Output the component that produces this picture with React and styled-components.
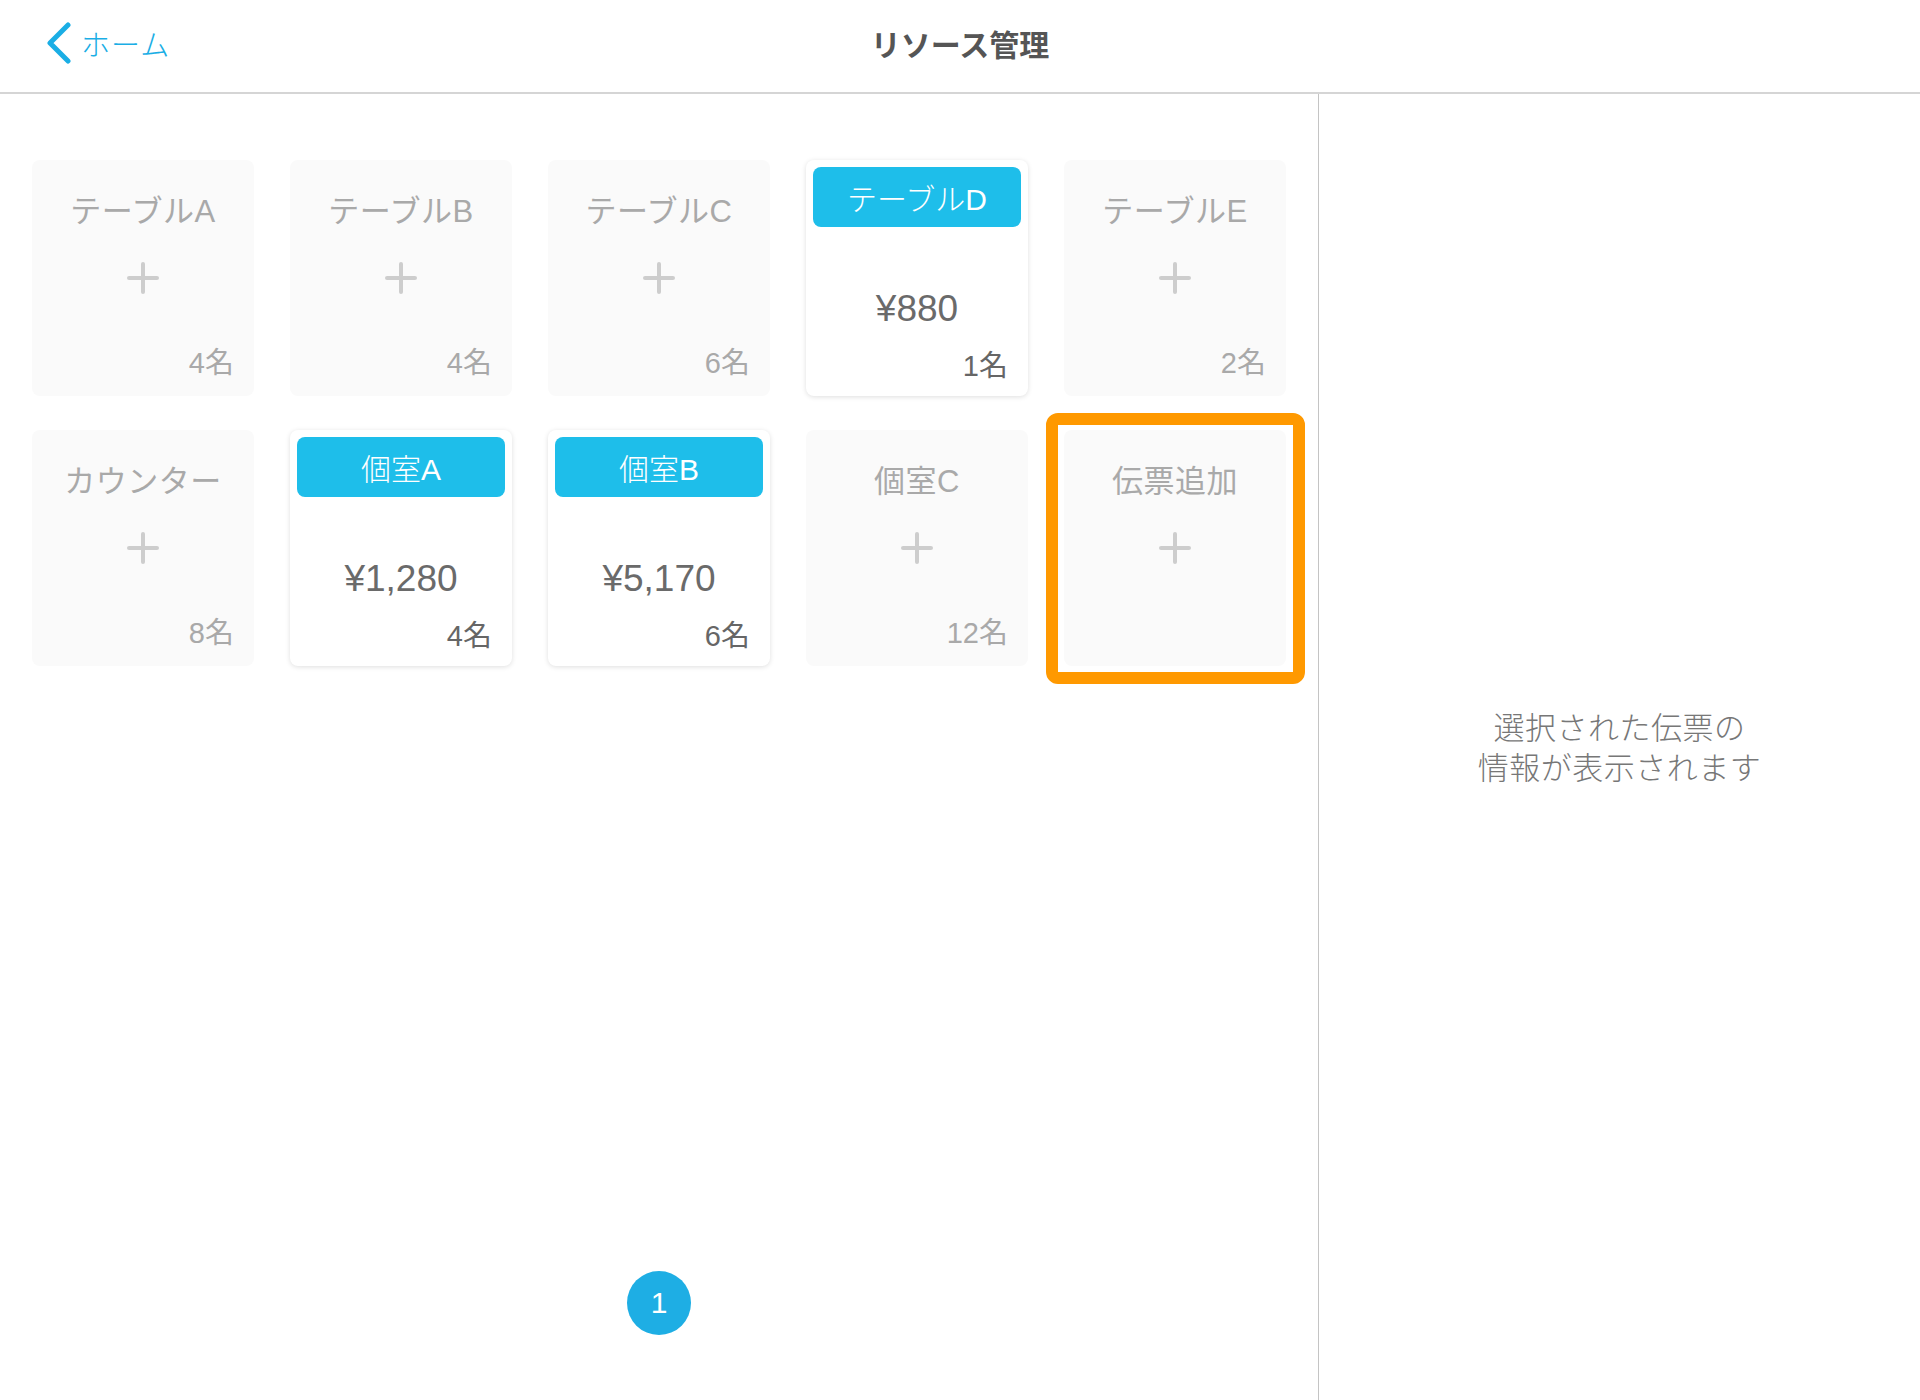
import React from "react";
import styled, { createGlobalStyle, css } from "styled-components";

const GlobalStyle = createGlobalStyle`
  body {
    margin: 0;
    background: #fff;
    font-family: "Liberation Sans", "Noto Sans CJK JP", sans-serif;
  }
`;

const resources = [
  { name: "テーブルA", seats: 4 },
  { name: "テーブルB", seats: 4 },
  { name: "テーブルC", seats: 6 },
  { name: "テーブルD", seats: 1, price: "¥880" },
  { name: "テーブルE", seats: 2 },
  { name: "カウンター", seats: 8 },
  { name: "個室A", seats: 4, price: "¥1,280" },
  { name: "個室B", seats: 6, price: "¥5,170" },
  { name: "個室C", seats: 12 },
  { name: "伝票追加", add: true, selected: true },
];

const PlusIcon = () => (
  <svg width="32" height="32" viewBox="0 0 32 32">
    <path
      d="M16 2v28M2 16h28"
      stroke="#cdcdcd"
      strokeWidth="4"
      strokeLinecap="round"
      fill="none"
    />
  </svg>
);

const Chevron = () => (
  <svg width="26" height="42" viewBox="0 0 26 42">
    <polyline
      points="22,3 4,21 22,39"
      stroke="#1aaee5"
      strokeWidth="5"
      strokeLinecap="round"
      strokeLinejoin="round"
      fill="none"
    />
  </svg>
);

const ResourceCard = ({ item }) => {
  if (item.price) {
    return (
      <Card $busy>
        <Band>{item.name}</Band>
        <Price>{item.price}</Price>
        <Seats $busy>{item.seats}名</Seats>
      </Card>
    );
  }
  return (
    <Card $selected={item.selected}>
      <Name>{item.name}</Name>
      <PlusWrap>
        <PlusIcon />
      </PlusWrap>
      {!item.add && <Seats>{item.seats}名</Seats>}
    </Card>
  );
};

const App = () => {
  return (
    <Page>
      <GlobalStyle />
      <Header>
        <Back>
          <Chevron />
          <span>ホーム</span>
        </Back>
        <Title>リソース管理</Title>
        <div />
      </Header>
      <Body>
        <LeftPanel>
          <Grid>
            {resources.map((r) => (
              <ResourceCard key={r.name} item={r} />
            ))}
          </Grid>
          <Pager>
            <PageDot>1</PageDot>
          </Pager>
        </LeftPanel>
        <RightPanel>
          <Hint>
            選択された伝票の
            <br />
            情報が表示されます
          </Hint>
        </RightPanel>
      </Body>
    </Page>
  );
};

export default App;

const Page = styled.div`
  width: 1920px;
  height: 1400px;
  display: flex;
  flex-direction: column;
  overflow: hidden;
`;

const Header = styled.div`
  height: 94px;
  flex-shrink: 0;
  box-sizing: border-box;
  padding-bottom: 6px;
  border-bottom: 2px solid #d5d5d5;
  display: grid;
  grid-template-columns: 1fr auto 1fr;
  align-items: center;
  padding-left: 46px;
`;

const Back = styled.div`
  display: flex;
  align-items: center;
  gap: 9px;
  color: #1aaee5;
  font-size: 29px;
  font-weight: 300;
  letter-spacing: 1px;
`;

const Title = styled.div`
  font-size: 30px;
  font-weight: 700;
  color: #555;
  margin-left: -46px;
`;

const Body = styled.div`
  flex: 1;
  display: flex;
`;

const LeftPanel = styled.div`
  width: 1319px;
  border-right: 1px solid #c4c4c4;
  display: flex;
  flex-direction: column;
  padding: 66px 0 0 32px;
  box-sizing: border-box;
`;

const Grid = styled.div`
  display: grid;
  grid-template-columns: repeat(5, 222px);
  grid-auto-rows: 236px;
  column-gap: 36px;
  row-gap: 34px;
`;

const Card = styled.div`
  position: relative;
  border-radius: 8px;
  background: #fafafa;
  display: flex;
  flex-direction: column;
  align-items: center;
  box-sizing: border-box;

  ${(p) =>
    p.$busy &&
    css`
      background: #fff;
      box-shadow: 0 1px 5px rgba(0, 0, 0, 0.13);
      padding: 7px;
    `}

  ${(p) =>
    p.$selected &&
    css`
      &::after {
        content: "";
        position: absolute;
        inset: -17px -19px -18px -18px;
        border: 12px solid #ff9900;
        border-radius: 12px;
      }
    `}
`;

const Name = styled.div`
  margin-top: 32px;
  height: 40px;
  line-height: 40px;
  font-size: 31px;
  letter-spacing: 0.5px;
  color: #a9a9a9;
`;

const PlusWrap = styled.div`
  margin-top: 30px;
  height: 32px;
`;

const Seats = styled.div`
  align-self: stretch;
  text-align: right;
  padding-right: 20px;
  margin-top: 54px;
  height: 30px;
  line-height: 30px;
  font-size: 29px;
  color: #a9a9a9;

  ${(p) =>
    p.$busy &&
    css`
      margin-top: 19px;
      padding-right: 13px;
      color: #666;
    `}
`;

const Band = styled.div`
  align-self: stretch;
  height: 60px;
  border-radius: 8px;
  background: #1ebeea;
  color: #fff;
  font-size: 30px;
  font-weight: 300;
  display: flex;
  align-items: center;
  justify-content: center;
`;

const Price = styled.div`
  margin-top: 59px;
  height: 46px;
  line-height: 46px;
  font-size: 37px;
  color: #6a6a6a;
`;

const Pager = styled.div`
  margin-top: auto;
  padding-bottom: 65px;
  display: flex;
  justify-content: center;
  margin-left: -32px;
`;

const PageDot = styled.div`
  width: 64px;
  height: 64px;
  border-radius: 50%;
  background: #1eaee4;
  color: #fff;
  font-size: 30px;
  display: flex;
  align-items: center;
  justify-content: center;
`;

const RightPanel = styled.div`
  flex: 1;
  display: flex;
  align-items: center;
  justify-content: center;
  padding-top: 4px;
`;

const Hint = styled.div`
  text-align: center;
  font-size: 31px;
  line-height: 40px;
  letter-spacing: 0.5px;
  font-weight: 300;
  color: #777;
`;
